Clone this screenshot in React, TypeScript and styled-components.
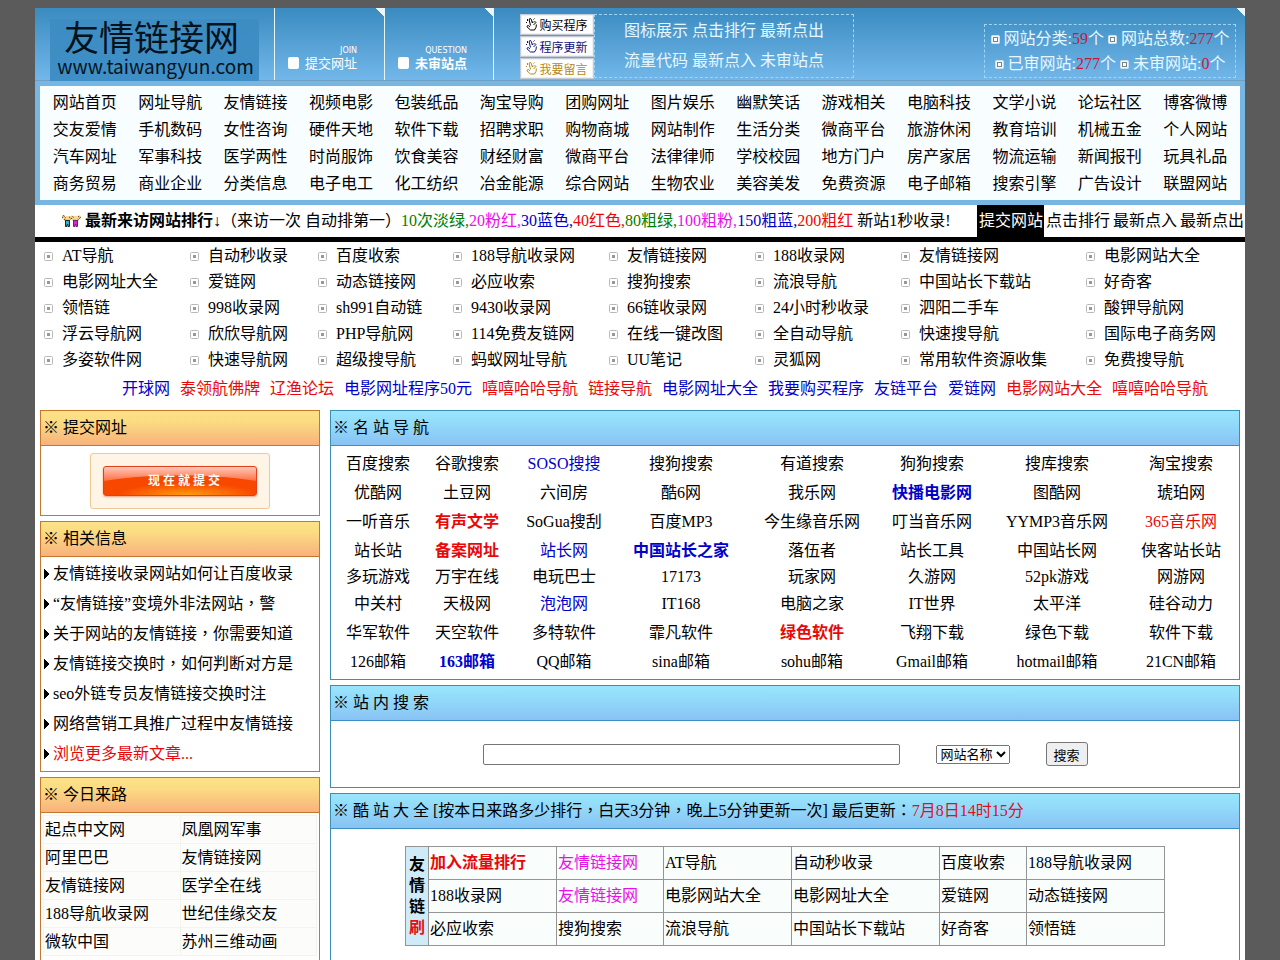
import React from "react";
import styled, { createGlobalStyle } from "styled-components";

const serif = `"Liberation Serif", "Noto Sans CJK SC", serif`;
const sans = `"Noto Sans CJK SC", "Noto Sans", sans-serif`;

const GlobalStyle = createGlobalStyle`
  * { box-sizing: border-box; }
  body {
    margin: 0;
    padding: 8px 35px 0;
    background: #5b5b5b;
    color: #000;
    font: 16px/20px ${serif};
  }
  a { color: inherit; text-decoration: none; }
  ul { list-style: none; margin: 0; padding: 0; }
  table { border-collapse: collapse; }
`;

type Tone = "red" | "blue" | "pink" | "green";
const tones: Record<Tone, string> = {
  red: "#e80808",
  blue: "#0000cc",
  pink: "#e810e8",
  green: "#008000",
};

const Page = styled.div`
  background: #fff;
  max-width: 1600px;
  margin: 0 auto;
`;

const Link = styled.a<{ $tone?: Tone; $bold?: boolean }>`
  color: ${(p) => (p.$tone ? tones[p.$tone] : "inherit")};
  font-weight: ${(p) => (p.$bold ? 700 : 400)};
`;

/* Centred full-width punctuation inside running text. */
const Mark = styled.span`
  font-family: "Noto Sans CJK TC", sans-serif;
  line-height: 1;
`;

const Text = ({ children }: { children: string }) => (
  <>
    {children.split(/([，：])/).map((part, i) =>
      /[，：]/.test(part) ? <Mark key={i}>{part}</Mark> : part
    )}
  </>
);

/* ---------- header ---------- */

const Header = styled.header`
  display: flex;
  height: 73px;
  border-bottom: 1px solid #6f9fc2;
  background: linear-gradient(#3a8bc0, #72b7ea);
`;

const LogoCell = styled.div`
  display: flex;
  align-items: flex-end;
  width: 240px;
  padding-left: 15px;
  border-right: 1px solid #e8f4fb;
`;

const Logo = styled.a`
  display: flex;
  flex-direction: column;
  align-items: center;
  width: 209px;
  height: 62px;
  margin-bottom: -1px;
  background: linear-gradient(#3d8dc3, #3f8fc6);
  color: #04121c;
  font-family: ${sans};
`;

const LogoName = styled.span`
  font-size: 35px;
  line-height: 34px;
  padding-right: 6px;
`;

const LogoUrl = styled.span`
  font-size: 19px;
  line-height: 26px;
  padding-left: 2px;
`;

const Corner = styled.span`
  position: absolute;
  top: 0;
  right: 0;
  width: 8px;
  height: 8px;
  background: linear-gradient(to top right, transparent 50%, #eef6fb 50%);
`;

const TabCell = styled.a`
  position: relative;
  display: flex;
  align-items: flex-end;
  gap: 6px;
  width: 110px;
  padding: 0 0 10px 13px;
  border-right: 1px solid #e8f4fb;
  color: #fff;
  & + & { width: 109px; }
`;

const TabMark = styled.span`
  width: 11px;
  height: 12px;
  margin-bottom: 1px;
  border-radius: 2px;
  background: #fff;
`;

const TabText = styled.span<{ $bold?: boolean }>`
  display: flex;
  flex-direction: column;
  align-items: flex-end;
  font: ${(p) => (p.$bold ? 700 : 400)} 13px/15px ${sans};
`;

const TabCaption = styled.small`
  font: 8px/8px "DejaVu Sans", sans-serif;
`;

const Tools = styled.div`
  position: relative;
  flex: 1;
  display: flex;
  align-items: flex-start;
  padding: 6px 9px 0 26px;
`;

const ToolStack = styled.div`
  display: flex;
  flex-direction: column;
  gap: 1px;
`;

const ToolButton = styled.a<{ $color: string }>`
  display: flex;
  align-items: center;
  justify-content: center;
  gap: 2px;
  width: 74px;
  height: 21px;
  border: 1px solid #c3ccd6;
  background: #fff;
  box-shadow: inset 0 0 0 1px #f0f0f0;
  color: ${(p) => p.$color};
  font: 12px/16px ${sans};
`;

const Shortcuts = styled.nav`
  width: 260px;
  height: 64px;
  padding-top: 1px;
  border: 1px dashed #9fd4f2;
  color: #e6f8ff;
  line-height: 30px;
  text-align: center;
`;

const Stats = styled.div`
  width: 252px;
  height: 54px;
  margin: 10px 0 0 auto;
  padding-top: 1px;
  border: 1px dashed #9fd4f2;
  color: #e6f8ff;
  line-height: 25px;
  text-align: center;
  white-space: nowrap;
  b { color: #c81838; font-weight: 400; }
`;

/* ---------- category navigation ---------- */

const Categories = styled.nav`
  display: grid;
  grid-template-columns: repeat(14, 1fr);
  padding: 3px 2px;
  border: 5px solid #76b6e0;
  background: #f8fdff;
  line-height: 27px;
  text-align: center;
  white-space: nowrap;
`;

/* ---------- notice bar ---------- */

const Notice = styled.div`
  display: flex;
  align-items: center;
  height: 37px;
  padding-left: 27px;
  border-bottom: 5px solid #000;
  line-height: 32px;
  white-space: nowrap;
`;

const NoticeText = styled.p`
  flex: 1;
  margin: 0 0 0 4px;
`;

const NoticeLink = styled.a<{ $active?: boolean }>`
  width: 67px;
  padding-left: 2px;
  background: ${(p) => (p.$active ? "#000" : "transparent")};
  color: ${(p) => (p.$active ? "#fff" : "#000")};
`;

/* ---------- latest visitors ---------- */

const Visitors = styled.ul`
  display: grid;
  grid-template-columns: 146fr 128fr 135fr 156fr 146fr 146fr 185fr 159fr;
  padding: 1px 0 1px 9px;
  line-height: 26px;
  white-space: nowrap;
  li { display: flex; align-items: center; gap: 9px; }
`;

const Promos = styled.nav`
  display: flex;
  justify-content: center;
  gap: 10px;
  padding: 0 0 6px 50px;
  line-height: 30px;
  white-space: nowrap;
`;

/* ---------- panels ---------- */

const Columns = styled.main`
  display: grid;
  grid-template-columns: 280px 1fr;
  gap: 10px;
  padding: 0 5px;
`;

const Column = styled.div`
  display: flex;
  flex-direction: column;
  gap: 5px;
`;

const Panel = styled.section<{ $warm?: boolean; $last?: boolean }>`
  border: 1px solid ${(p) => (p.$warm ? "#c8762c" : "#3c8fb4")};
  flex-grow: ${(p) => (p.$last ? 1 : 0)};
`;

const PanelTitle = styled.h2<{ $warm?: boolean }>`
  margin: 0;
  padding-left: 2px;
  border-bottom: 1px solid ${(p) => (p.$warm ? "#c8762c" : "#3c8fc4")};
  background: ${(p) =>
    p.$warm
      ? "linear-gradient(#fce287, #fbdc82 30%, #f8b27c)"
      : "linear-gradient(#99e6fc, #90d6f9 50%, #89c2f3)"};
  font-size: 16px;
  font-weight: 400;
  line-height: 34px;
`;

const SubmitArea = styled.div`
  display: flex;
  justify-content: center;
  padding: 7px 0 6px;
`;

const SubmitFrame = styled.div`
  padding: 12px;
  border: 1px solid #f0c898;
  border-radius: 3px;
  background: #fef5e6;
`;

const SubmitButton = styled.button`
  display: block;
  width: 154px;
  height: 30px;
  padding: 0 0 0 8px;
  border: 1px solid #e0401c;
  border-radius: 3px;
  background:
    radial-gradient(ellipse 70px 12px at 55% 100%, #ff9c10, transparent),
    radial-gradient(ellipse 110px 20px at 50% 100%, #f84800 96%, transparent),
    linear-gradient(#ffc8b8, #ff7850 45%, #f84400 60%);
  box-shadow: 0 1px 2px #f0a080;
  color: #fff;
  font: 700 12px/28px "Liberation Serif", "Noto Sans CJK SC", serif;
`;

const Articles = styled.ul`
  padding: 2px 3px;
  line-height: 30px;
  white-space: nowrap;
  li { display: flex; align-items: center; gap: 4px; height: 30px; }
`;

const Referrers = styled.table`
  width: 274px;
  margin: 2px 2px 0;
  td {
    width: 50%;
    height: 28px;
    padding: 0 1px;
    border: 1px solid #f4f4ef;
    background: #fcfcfa;
  }
`;

const Famous = styled.table`
  width: calc(100% - 8px);
  margin: 3px 6px 3px 2px;
  table-layout: fixed;
  text-align: center;
  white-space: nowrap;
  td { padding: 0; }
`;

const FamousRow = styled.tr<{ $height: number }>`
  height: ${(p) => p.$height}px;
`;

const SearchForm = styled.form`
  display: flex;
  align-items: center;
  justify-content: center;
  gap: 36px;
  height: 66px;
  font-size: 13px;
`;

const SearchInput = styled.input`
  width: 417px;
  height: 21px;
  border: 1px solid #767676;
  border-radius: 2px;
`;

const SearchSelect = styled.select`
  width: 74px;
  height: 19px;
  font: 13px ${serif};
`;

const SearchButton = styled.button`
  width: 42px;
  height: 24px;
  padding: 0;
  border: 1px solid #767676;
  border-radius: 3px;
  background: #efefef;
  font: 13px ${serif};
`;

const Ranking = styled.table`
  width: 760px;
  margin: 17px auto 40px;
  table-layout: fixed;
  white-space: nowrap;
  th, td { border: 1px solid #949494; }
  th { padding: 0; background: #d0ebf8; line-height: 21px; white-space: normal; }
  td { height: 33px; padding: 0 1px; background: #f9fdfc; }
`;

const Red = styled.span`
  color: #e01020;
`;

/* ---------- drawings ---------- */

const Dot = ({ light }: { light?: boolean }) =>
  light ? (
    <svg width="9" height="9" viewBox="0 0 9 9" aria-hidden="true">
      <rect x="0.5" y="0.5" width="8" height="8" rx="1" fill="#f4f8fa" stroke="#d4dee4" />
      <rect x="2.5" y="2.5" width="4" height="4" fill="#fff" stroke="#6f8594" />
    </svg>
  ) : (
    <svg width="9" height="9" viewBox="0 0 9 9" aria-hidden="true">
      <rect x="0.5" y="0.5" width="8" height="8" rx="1" fill="#fff" stroke="#b8b8b8" />
      <rect x="3" y="3" width="3" height="3" fill="#989898" />
    </svg>
  );

const Arrow = () => (
  <svg width="5" height="10" viewBox="0 0 5 10" aria-hidden="true">
    <path d="M0 0h1v1h1v1h1v1h1v1h1v2h-1v1h-1v1h-1v1h-1v1h-1z" fill="#000" />
  </svg>
);

const Hand = () => (
  <svg width="11" height="13" viewBox="0 0 11 13" fill="none" stroke="currentColor" aria-hidden="true">
    <path d="M4.500 7.500L3.200 2q0-1.500 1-1.500t1.200 1.200L6.300 5" />
    <path d="M6.300 5l.7-1.500 1 1 1-1.200 1 1.700" strokeDasharray="2 1" />
    <path d="M10 4.500L7.500 7M10.400 6.500q.2 3-1.900 5.500H4.500L1 8.800q0-1.300 1.300-1.300L4 8.800" />
    <path d="M1.500 1v2M0 4.500h1M7.500 1.500l1-1" />
  </svg>
);

const People = () => (
  <svg width="19" height="13" viewBox="0 0 19 13" aria-hidden="true">
    <path d="M.5 1l3.500 3.500h3L9.500 1.500 12 4.500h3L18.500 1" fill="none" stroke="#4c3410" strokeWidth="3" strokeDasharray="2 1" />
    <path d="M.5 1l3.500 3.500h3L9.500 1.500 12 4.500h3L18.500 1" fill="none" stroke="#f4cc70" strokeWidth="1.500" />
    <rect x="4" y="1" width="3" height="3" fill="#f8d890" />
    <rect x="12" y="1" width="3" height="3" fill="#f8d890" />
    <path d="M3.500 5.500h4v6h-1.500v-2h-1v2H3.500z" fill="#38b0c8" stroke="#222" />
    <path d="M11.500 5.500h4v6H14v-2h-1v2h-1.500z" fill="#d828d8" stroke="#702070" />
  </svg>
);

/* ---------- data ---------- */

const categories = `网站首页 网址导航 友情链接 视频电影 包装纸品 淘宝导购 团购网址 图片娱乐 幽默笑话 游戏相关 电脑科技 文学小说 论坛社区 博客微博
交友爱情 手机数码 女性咨询 硬件天地 软件下载 招聘求职 购物商城 网站制作 生活分类 微商平台 旅游休闲 教育培训 机械五金 个人网站
汽车网址 军事科技 医学两性 时尚服饰 饮食美容 财经财富 微商平台 法律律师 学校校园 地方门户 房产家居 物流运输 新闻报刊 玩具礼品
商务贸易 商业企业 分类信息 电子电工 化工纺织 冶金能源 综合网站 生物农业 美容美发 免费资源 电子邮箱 搜索引擎 广告设计 联盟网站`.split(/\s+/);

const visitors = `AT导航 自动秒收录 百度收索 188导航收录网 友情链接网 188收录网 友情链接网 电影网站大全
电影网址大全 爱链网 动态链接网 必应收索 搜狗搜索 流浪导航 中国站长下载站 好奇客
领悟链 998收录网 sh991自动链 9430收录网 66链收录网 24小时秒收录 泗阳二手车 酸钾导航网
浮云导航网 欣欣导航网 PHP导航网 114免费友链网 在线一键改图 全自动导航 快速搜导航 国际电子商务网
多姿软件网 快速导航网 超级搜导航 蚂蚁网址导航 UU笔记 灵狐网 常用软件资源收集 免费搜导航`.split(/\s+/);

const promos: [string, Tone][] = [
  ["开球网", "blue"], ["泰领航佛牌", "red"], ["辽渔论坛", "red"], ["电影网址程序50元", "blue"],
  ["嘻嘻哈哈导航", "red"], ["链接导航", "red"], ["电影网址大全", "blue"], ["我要购买程序", "blue"],
  ["友链平台", "blue"], ["爱链网", "blue"], ["电影网站大全", "red"], ["嘻嘻哈哈导航", "red"],
];

const legend: [string, Tone][] = [
  ["10次淡绿,", "green"], ["20粉红,", "pink"], ["30蓝色,", "blue"], ["40红色,", "red"],
  ["80粗绿,", "green"], ["100粗粉,", "pink"], ["150粗蓝,", "blue"], ["200粗红", "red"],
];

const articles = [
  "友情链接收录网站如何让百度收录",
  "“友情链接”变境外非法网站，警",
  "关于网站的友情链接，你需要知道",
  "友情链接交换时，如何判断对方是",
  "seo外链专员友情链接交换时注",
  "网络营销工具推广过程中友情链接",
];

const referrers = [
  ["起点中文网", "凤凰网军事"],
  ["阿里巴巴", "友情链接网"],
  ["友情链接网", "医学全在线"],
  ["188导航收录网", "世纪佳缘交友"],
  ["微软中国", "苏州三维动画"],
];

const famousWidths = [90, 88, 106, 128, 134, 106, 144, 104];
const famous: { height: number; sites: string[] }[] = [
  { height: 29, sites: ["百度搜索", "谷歌搜索", "SOSO搜搜", "搜狗搜索", "有道搜索", "狗狗搜索", "搜库搜索", "淘宝搜索"] },
  { height: 29, sites: ["优酷网", "土豆网", "六间房", "酷6网", "我乐网", "快播电影网", "图酷网", "琥珀网"] },
  { height: 29, sites: ["一听音乐", "有声文学", "SoGua搜刮", "百度MP3", "今生缘音乐网", "叮当音乐网", "YYMP3音乐网", "365音乐网"] },
  { height: 29, sites: ["站长站", "备案网址", "站长网", "中国站长之家", "落伍者", "站长工具", "中国站长网", "侠客站长站"] },
  { height: 24, sites: ["多玩游戏", "万宇在线", "电玩巴士", "17173", "玩家网", "久游网", "52pk游戏", "网游网"] },
  { height: 29, sites: ["中关村", "天极网", "泡泡网", "IT168", "电脑之家", "IT世界", "太平洋", "硅谷动力"] },
  { height: 29, sites: ["华军软件", "天空软件", "多特软件", "霏凡软件", "绿色软件", "飞翔下载", "绿色下载", "软件下载"] },
  { height: 29, sites: ["126邮箱", "163邮箱", "QQ邮箱", "sina邮箱", "sohu邮箱", "Gmail邮箱", "hotmail邮箱", "21CN邮箱"] },
];
const famousStyle: Record<string, [Tone, boolean]> = {
  SOSO搜搜: ["blue", false],
  快播电影网: ["blue", true],
  有声文学: ["red", true],
  "365音乐网": ["red", false],
  备案网址: ["red", true],
  站长网: ["blue", false],
  中国站长之家: ["blue", true],
  泡泡网: ["blue", false],
  绿色软件: ["red", true],
  "163邮箱": ["blue", true],
};

const rankingWidths = [23, 128, 107, 128, 148, 87, 138];
const ranking = [
  ["加入流量排行", "友情链接网", "AT导航", "自动秒收录", "百度收索", "188导航收录网"],
  ["188收录网", "友情链接网", "电影网站大全", "电影网址大全", "爱链网", "动态链接网"],
  ["必应收索", "搜狗搜索", "流浪导航", "中国站长下载站", "好奇客", "领悟链"],
];

const share = (w: number, all: number[]) => ({ width: `${(w / all.reduce((a, b) => a + b)) * 100}%` });

/* ---------- page ---------- */

export default function App() {
  return (
    <>
      <GlobalStyle />
      <Page>
        <Header>
          <LogoCell>
            <Logo href="#">
              <LogoName>友情链接网</LogoName>
              <LogoUrl>www.taiwangyun.com</LogoUrl>
            </Logo>
          </LogoCell>
          <TabCell href="#">
            <TabMark />
            <TabText><TabCaption>JOIN</TabCaption>提交网址</TabText>
            <Corner />
          </TabCell>
          <TabCell href="#">
            <TabMark />
            <TabText $bold><TabCaption>QUESTION</TabCaption>未审站点</TabText>
            <Corner />
          </TabCell>
          <Tools>
            <ToolStack>
              <ToolButton href="#" $color="#000"><Hand />购买程序</ToolButton>
              <ToolButton href="#" $color="#101080"><Hand />程序更新</ToolButton>
              <ToolButton href="#" $color="#b88818"><Hand />我要留言</ToolButton>
            </ToolStack>
            <Shortcuts>
              <a href="#">图标展示</a> <a href="#">点击排行</a> <a href="#">最新点出</a><br />
              <a href="#">流量代码</a> <a href="#">最新点入</a> <a href="#">未审站点</a>
            </Shortcuts>
            <Stats>
              <Dot light /> 网站分类:<b>59</b>个 <Dot light /> 网站总数:<b>277</b>个<br />
              <Dot light /> 已审网站:<b>277</b>个 <Dot light /> 未审网站:<b>0</b>个
            </Stats>
            <Corner />
          </Tools>
        </Header>

        <Categories>
          {categories.map((name, i) => <a href="#" key={i}>{name}</a>)}
        </Categories>

        <Notice>
          <People />
          <NoticeText>
            <b>最新来访网站排行</b>↓（来访一次 自动排第一）
            {legend.map(([text, tone]) => <Link as="span" $tone={tone} key={text}>{text}</Link>)}
            {" "}新站1秒收录!
          </NoticeText>
          <NoticeLink href="#" $active>提交网站</NoticeLink>
          <NoticeLink href="#">点击排行</NoticeLink>
          <NoticeLink href="#">最新点入</NoticeLink>
          <NoticeLink href="#">最新点出</NoticeLink>
        </Notice>

        <Visitors>
          {visitors.map((name, i) => <li key={i}><Dot /><a href="#">{name}</a></li>)}
        </Visitors>
        <Promos>
          {promos.map(([name, tone], i) => <Link href="#" $tone={tone} key={i}>{name}</Link>)}
        </Promos>

        <Columns>
          <Column>
            <Panel $warm>
              <PanelTitle $warm>※ 提交网址</PanelTitle>
              <SubmitArea>
                <SubmitFrame><SubmitButton type="button">现 在 就 提 交</SubmitButton></SubmitFrame>
              </SubmitArea>
            </Panel>
            <Panel $warm>
              <PanelTitle $warm>※ 相关信息</PanelTitle>
              <Articles>
                {articles.map((title) => <li key={title}><Arrow /><a href="#"><Text>{title}</Text></a></li>)}
                <li><Arrow /><Link href="#" $tone="red">浏览更多最新文章...</Link></li>
              </Articles>
            </Panel>
            <Panel $warm $last>
              <PanelTitle $warm>※ 今日来路</PanelTitle>
              <Referrers>
                <tbody>
                  {referrers.map((row) => (
                    <tr key={row[0]}>{row.map((name) => <td key={name}><a href="#">{name}</a></td>)}</tr>
                  ))}
                </tbody>
              </Referrers>
            </Panel>
          </Column>

          <Column>
            <Panel>
              <PanelTitle>※ 名 站 导 航</PanelTitle>
              <Famous>
                <colgroup>{famousWidths.map((w, i) => <col key={i} style={share(w, famousWidths)} />)}</colgroup>
                <tbody>
                  {famous.map((row) => (
                    <FamousRow $height={row.height} key={row.sites[0]}>
                      {row.sites.map((name) => (
                        <td key={name}>
                          <Link href="#" $tone={famousStyle[name]?.[0]} $bold={famousStyle[name]?.[1]}>{name}</Link>
                        </td>
                      ))}
                    </FamousRow>
                  ))}
                </tbody>
              </Famous>
            </Panel>
            <Panel>
              <PanelTitle>※ 站 内 搜 索</PanelTitle>
              <SearchForm onSubmit={(e) => e.preventDefault()}>
                <SearchInput type="text" aria-label="站内搜索" />
                <SearchSelect aria-label="搜索范围"><option>网站名称</option></SearchSelect>
                <SearchButton type="submit">搜索</SearchButton>
              </SearchForm>
            </Panel>
            <Panel $last>
              <PanelTitle>
                <Text>※ 酷 站 大 全 [按本日来路多少排行，白天3分钟，晚上5分钟更新一次] 最后更新：</Text><Red>7月8日14时15分</Red>
              </PanelTitle>
              <Ranking>
                <colgroup>{rankingWidths.map((w, i) => <col key={i} style={share(w, rankingWidths)} />)}</colgroup>
                <tbody>
                  {ranking.map((row, r) => (
                    <tr key={r}>
                      {r === 0 && <th rowSpan={3} scope="rowgroup">友<br />情<br />链<br /><Red>刷</Red></th>}
                      {row.map((name, c) => (
                        <td key={c}>
                          <Link
                            href="#"
                            $bold={r === 0 && c === 0}
                            $tone={c === 0 && r === 0 ? "red" : c === 1 && r < 2 ? "pink" : undefined}
                          >
                            {name}
                          </Link>
                        </td>
                      ))}
                    </tr>
                  ))}
                </tbody>
              </Ranking>
            </Panel>
          </Column>
        </Columns>
      </Page>
    </>
  );
}
